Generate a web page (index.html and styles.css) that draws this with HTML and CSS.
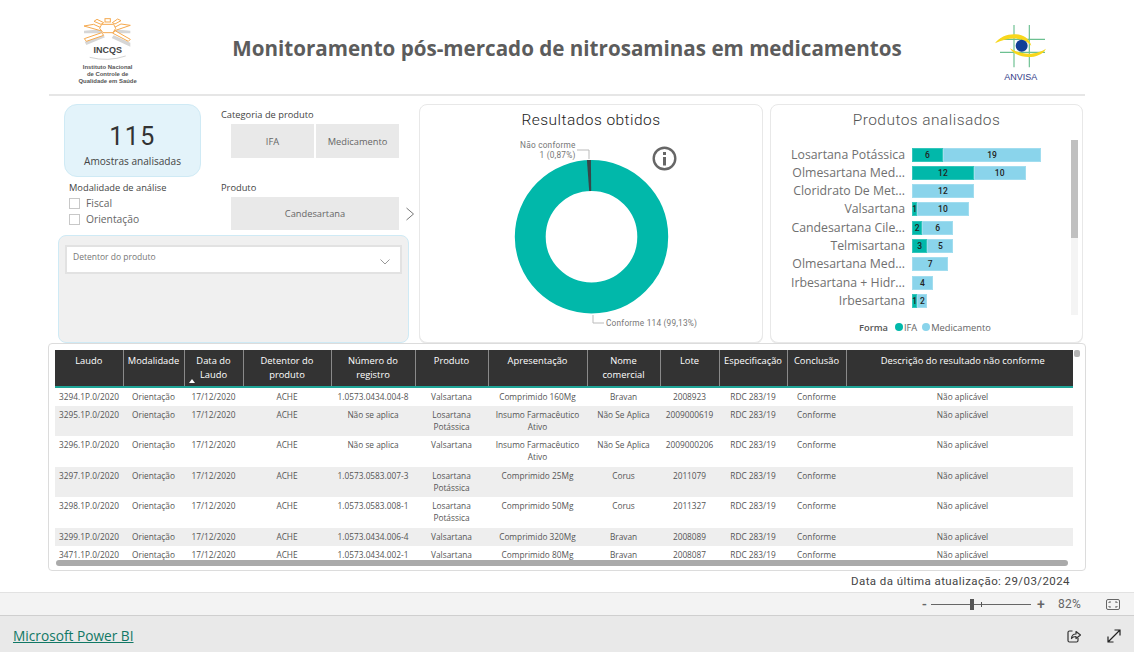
FILE: index.html
```html
<!DOCTYPE html>
<html lang="pt-BR">
<head>
<meta charset="utf-8">
<title>Monitoramento pós-mercado de nitrosaminas em medicamentos</title>
<link rel="stylesheet" href="styles.css">
</head>
<body>
<div class="report">
  <header class="head">
    <svg class="logo-incqs" viewBox="100 45 200 215">
      <g fill="#d6d6d6">
        <polygon points="133,92 185,88 190,100 133,100"/>
        <polygon points="135,125 190,105 196,112 140,135"/>
        <polygon points="272,92 222,88 216,100 272,100"/>
        <polygon points="272,128 222,106 216,114 272,140"/>
      </g>
      <g fill="#fff" stroke="#f5a94e" stroke-width="3">
        <polygon points="133,78 162,73 186,84 186,93"/>
        <polygon points="134,116 186,98 192,106 140,124"/>
        <polygon points="272,76 244,72 221,84 222,93"/>
        <polygon points="272,118 226,92 220,100 266,124"/>
        <polygon points="163,64 172,58 192,68 184,73"/>
        <polygon points="244,62 234,57 218,68 226,72"/>
        <rect x="196" y="56" width="16" height="10"/>
        <polygon points="186,73 222,73 228,85 220,98 190,98 180,85"/>
      </g>
      <text class="incqs-mark" x="204" y="158" text-anchor="middle">INCQS</text>
      <path d="M150 172 Q205 186 258 168" fill="none" stroke="#bbb" stroke-width="2"/>
      <text class="incqs-sub" x="204" y="207" text-anchor="middle">Instituto Nacional</text>
      <text class="incqs-sub" x="204" y="228" text-anchor="middle">de Controle de</text>
      <text class="incqs-sub" x="204" y="248" text-anchor="middle">Qualidade em Saúde</text>
    </svg>
    <h1 class="title">Monitoramento pós-mercado de nitrosaminas em medicamentos</h1>
    <svg class="logo-anvisa" viewBox="90 30 180 190">
      <g stroke="#6cc091" stroke-width="3.5" fill="none">
        <path d="M162 45V172M208 45V172"/>
        <path d="M120 88H255M120 127H255"/>
      </g>
      <path d="M105 100C130 62 205 62 214 108C195 82 150 78 105 100Z" fill="#f8d71c"/>
      <path d="M150 115C170 150 240 150 258 116C235 132 190 140 150 115Z" fill="#f8d71c"/>
      <circle cx="185" cy="107" r="18" fill="#123f97"/>
      <text class="anvisa-mark" x="182" y="211" text-anchor="middle">ANVISA</text>
    </svg>
  </header>
  <div class="rule"></div>

  <section class="top">
    <div class="filters">
      <div class="filters-upper">
        <div class="col-a">
          <div class="kpi">
            <div class="kpi-num">115</div>
            <div class="kpi-label">Amostras analisadas</div>
          </div>
          <div class="mod">
            <div class="slicer-label">Modalidade de análise</div>
            <label class="check"><span class="box"></span>Fiscal</label>
            <label class="check"><span class="box"></span>Orientação</label>
          </div>
        </div>
        <div class="col-b">
          <div class="slicer-label label-cat">Categoria de produto</div>
          <div class="chips">
            <div class="chip">IFA</div>
            <div class="chip">Medicamento</div>
          </div>
          <div class="slicer-label label-prod">Produto</div>
          <div class="prod-row">
            <div class="chip chip-wide">Candesartana</div>
            <svg class="chev" viewBox="0 0 10 14"><path d="M1.5 1L8.5 7L1.5 13" fill="none" stroke="#777" stroke-width="1"/></svg>
          </div>
        </div>
      </div>
      <div class="holder">
        <div class="dropdown">
          <span>Detentor do produto</span>
          <svg class="drop-chev" viewBox="0 0 10 6"><path d="M.5 .5L5 5L9.5 .5" fill="none" stroke="#999" stroke-width="1"/></svg>
        </div>
      </div>
    </div>

    <div class="card card-donut">
      <div class="card-title title-dark">Resultados obtidos</div>
      <svg class="donut" viewBox="0 0 344 212">
        <circle cx="172.5" cy="106.700" r="61.25" fill="none" stroke="#01b8aa" stroke-width="30.9"/>
        <path d="M167.900 30.100L171.900 30L172.200 61L170.200 61Z" fill="#374649"/>
        <path d="M158 20H170V29" fill="none" stroke="#bbb" stroke-width="1"/>
        <path d="M174 185V193H185" fill="none" stroke="#bbb" stroke-width="1"/>
        <text class="donut-label" x="156.500" y="18" text-anchor="end">Não conforme</text>
        <text class="donut-label" x="156.500" y="28" text-anchor="end">1 (0,87%)</text>
        <text class="donut-label" x="187" y="196">Conforme 114 (99,13%)</text>
        <circle cx="245.500" cy="28.500" r="10.800" fill="#fff" stroke="#666" stroke-width="2.400"/>
        <rect x="244" y="27" width="3" height="8.500" fill="#666"/>
        <rect x="244" y="22" width="3" height="3" fill="#666"/>
      </svg>
    </div>

    <div class="card card-bars">
      <div class="card-title">Produtos analisados</div>
      <div class="bars-area">
        <div class="bars">
          <div class="bar-row"><span class="bar-name">Losartana Potássica</span><div class="bar-track"><span class="seg ifa seg-6">6</span><span class="seg med seg-19">19</span></div></div>
          <div class="bar-row"><span class="bar-name">Olmesartana Med...</span><div class="bar-track"><span class="seg ifa seg-12">12</span><span class="seg med seg-10">10</span></div></div>
          <div class="bar-row"><span class="bar-name">Cloridrato De Met...</span><div class="bar-track"><span class="seg med seg-12">12</span></div></div>
          <div class="bar-row"><span class="bar-name">Valsartana</span><div class="bar-track"><span class="seg ifa seg-1">1</span><span class="seg med seg-10">10</span></div></div>
          <div class="bar-row"><span class="bar-name">Candesartana Cile...</span><div class="bar-track"><span class="seg ifa seg-2">2</span><span class="seg med seg-6">6</span></div></div>
          <div class="bar-row"><span class="bar-name">Telmisartana</span><div class="bar-track"><span class="seg ifa seg-3">3</span><span class="seg med seg-5">5</span></div></div>
          <div class="bar-row"><span class="bar-name">Olmesartana Med...</span><div class="bar-track"><span class="seg med seg-7">7</span></div></div>
          <div class="bar-row"><span class="bar-name">Irbesartana + Hidr...</span><div class="bar-track"><span class="seg med seg-4">4</span></div></div>
          <div class="bar-row"><span class="bar-name">Irbesartana</span><div class="bar-track"><span class="seg ifa seg-1">1</span><span class="seg med seg-2">2</span></div></div>
        </div>
        <div class="vscroll"><div class="vthumb"></div></div>
      </div>
      <div class="legend">
        <b>Forma</b>
        <span class="dot dot-ifa"></span><span>IFA</span>
        <span class="dot dot-med"></span><span>Medicamento</span>
      </div>
    </div>
  </section>

  <section class="table-card">
    <div class="table-view">
      <table class="grid">
        <colgroup>
          <col class="c1"><col class="c2"><col class="c3"><col class="c4"><col class="c5"><col class="c6"><col class="c7"><col class="c8"><col class="c9"><col class="c10"><col class="c11"><col class="c12">
        </colgroup>
        <thead>
          <tr>
            <th>Laudo</th><th>Modalidade</th><th class="sorted">Data do<br>Laudo<span class="sort-arrow"></span></th><th>Detentor do<br>produto</th><th>Número do<br>registro</th><th>Produto</th><th>Apresentação</th><th>Nome<br>comercial</th><th>Lote</th><th>Especificação</th><th>Conclusão</th><th>Descrição do resultado não conforme</th>
          </tr>
        </thead>
        <tbody>
          <tr><td>3294.1P.0/2020</td><td>Orientação</td><td>17/12/2020</td><td>ACHE</td><td>1.0573.0434.004-8</td><td>Valsartana</td><td>Comprimido 160Mg</td><td>Bravan</td><td>2008923</td><td>RDC 283/19</td><td>Conforme</td><td>Não aplicável</td></tr>
          <tr><td>3295.1P.0/2020</td><td>Orientação</td><td>17/12/2020</td><td>ACHE</td><td>Não se aplica</td><td>Losartana Potássica</td><td>Insumo Farmacêutico Ativo</td><td>Não Se Aplica</td><td>2009000619</td><td>RDC 283/19</td><td>Conforme</td><td>Não aplicável</td></tr>
          <tr><td>3296.1P.0/2020</td><td>Orientação</td><td>17/12/2020</td><td>ACHE</td><td>Não se aplica</td><td>Valsartana</td><td>Insumo Farmacêutico Ativo</td><td>Não Se Aplica</td><td>2009000206</td><td>RDC 283/19</td><td>Conforme</td><td>Não aplicável</td></tr>
          <tr><td>3297.1P.0/2020</td><td>Orientação</td><td>17/12/2020</td><td>ACHE</td><td>1.0573.0583.007-3</td><td>Losartana Potássica</td><td>Comprimido 25Mg</td><td>Corus</td><td>2011079</td><td>RDC 283/19</td><td>Conforme</td><td>Não aplicável</td></tr>
          <tr><td>3298.1P.0/2020</td><td>Orientação</td><td>17/12/2020</td><td>ACHE</td><td>1.0573.0583.008-1</td><td>Losartana Potássica</td><td>Comprimido 50Mg</td><td>Corus</td><td>2011327</td><td>RDC 283/19</td><td>Conforme</td><td>Não aplicável</td></tr>
          <tr><td>3299.1P.0/2020</td><td>Orientação</td><td>17/12/2020</td><td>ACHE</td><td>1.0573.0434.006-4</td><td>Valsartana</td><td>Comprimido 320Mg</td><td>Bravan</td><td>2008089</td><td>RDC 283/19</td><td>Conforme</td><td>Não aplicável</td></tr>
          <tr><td>3471.1P.0/2020</td><td>Orientação</td><td>17/12/2020</td><td>ACHE</td><td>1.0573.0434.002-1</td><td>Valsartana</td><td>Comprimido 80Mg</td><td>Bravan</td><td>2008087</td><td>RDC 283/19</td><td>Conforme</td><td>Não aplicável</td></tr>
        </tbody>
      </table>
    </div>
    <div class="hscroll"></div>
    <div class="vnub"></div>
  </section>

  <div class="updated">Data da última atualização: 29/03/2024</div>
</div>

<div class="zoombar">
  <span class="zoom-sign">-</span>
  <div class="slider"><span class="slider-thumb"></span><span class="slider-tick"></span></div>
  <span class="zoom-sign zoom-plus">+</span>
  <span class="zoom-val">82%</span>
  <svg class="fit" viewBox="0 0 14 11"><rect x=".5" y=".5" width="13" height="10" rx="1.500" fill="none" stroke="#666"/><path d="M3 4V3H5M9 3H11V4M11 7V8H9M5 8H3V7" fill="none" stroke="#666"/></svg>
</div>

<footer class="foot">
  <a class="pbi" href="#">Microsoft Power BI</a>
  <div class="foot-icons">
    <svg class="foot-ico" viewBox="0 0 14 14"><path d="M5.500 2H2.500Q1 2 1 3.500V11.500Q1 13 2.500 13H9.500Q11 13 11 11.500V9" fill="none" stroke="#333" stroke-width="1.200"/><path d="M4.500 9.500C4.500 6.500 6.500 5 9 5V2.500L13.500 6L9 9.500V7.500C7 7.500 5.500 8 4.500 9.500Z" fill="none" stroke="#333" stroke-width="1.200" stroke-linejoin="round"/></svg>
    <svg class="foot-ico" viewBox="0 0 14 14"><path d="M1 13L13 1M7.500 1H13V6.500M1 7.500V13H6.500" fill="none" stroke="#222" stroke-width="1.200"/></svg>
  </div>
</footer>
</body>
</html>
```

FILE: styles.css
```css
* { box-sizing: border-box; }
html, body { margin: 0; padding: 0; }
body {
  width: 1134px;
  height: 652px;
  overflow: hidden;
  background: #fff;
  font-family: "Open Sans", "Noto Sans", sans-serif;
  color: #666;
}
.report { height: 592px; background: #fff; }

/* header */
.head {
  height: 94px;
  display: grid;
  grid-template-columns: 1fr auto 1fr;
  align-items: start;
}
.logo-incqs { width: 66.67px; height: 71.67px; margin: 15px 0 0 73px; }
.logo-anvisa { width: 60px; height: 63.33px; margin: 20px 84px 0 0; justify-self: end; }
.incqs-mark { font: 700 27px "Liberation Sans", sans-serif; fill: #444; }
.incqs-sub { font: 700 17.800px "Liberation Sans", sans-serif; fill: #555; }
.anvisa-mark { font: 400 27px "Liberation Sans", sans-serif; fill: #2f3a86; }
.title {
  margin: 33px 0 0;
  font-size: 20.600px;
  line-height: 30px;
  font-weight: 700;
  color: #5c5c5c;
  white-space: nowrap;
}
.rule { height: 2px; width: 1036px; margin-left: 49px; background: #e6e6e6; }

/* top row */
.top {
  display: flex;
  height: 239px;
  margin-top: 8px;
  padding-left: 50px;
}
.filters { width: 360px; flex: none; display: flex; flex-direction: column; }
.filters-upper { display: flex; height: 131px; }
.col-a { width: 171px; flex: none; }
.col-b { width: 195px; flex: none; font-size: 9.300px; }
.kpi {
  width: 137px;
  height: 73px;
  margin-left: 14px;
  background: #e3f3fa;
  border: 1px solid #cfeaf5;
  border-radius: 13px;
  text-align: center;
  padding-top: 18px;
}
.kpi-num {
  font: 400 25px/28px Roboto, sans-serif;
  letter-spacing: 1.500px;
  color: #333;
}
.kpi-label { font-size: 10.100px; line-height: 14px; margin-top: 3px; color: #444; }
.slicer-label { font-size: 9.300px; line-height: 12px; color: #444; white-space: nowrap; }
.mod { margin: 5px 0 0 19px; }
.mod .slicer-label { line-height: 12px; margin-bottom: 1px; }
.check {
  display: flex;
  align-items: center;
  gap: 6px;
  height: 16px;
  font-size: 10.300px;
  color: #666;
}
.box { width: 11px; height: 11px; border: 1px solid #c8c8c8; background: #fff; }
.label-cat { margin-top: 5px; }
.label-prod { margin-top: 24px; }
.chips { display: flex; gap: 2px; margin: 3px 0 0 10px; width: 168px; }
.chip {
  flex: 1;
  height: 34px;
  background: #e9e9e9;
  color: #666;
  font-size: 9.300px;
  display: flex;
  align-items: center;
  justify-content: center;
}
.prod-row { display: flex; align-items: center; margin: 3px 0 0 10px; }
.chip-wide { flex: none; width: 168px; height: 33px; }
.chev { width: 10px; height: 14px; margin-left: 6px; flex: none; }
.holder {
  width: 351px;
  height: 108px;
  margin-left: 8px;
  background: #f0f0f0;
  border: 1px solid #cfeaf5;
  border-radius: 8px;
  padding: 9px 6px;
}
.dropdown {
  height: 29px;
  background: #fff;
  border: 2px solid #e2e2e2;
  display: flex;
  justify-content: space-between;
  padding: 3px 10px 0 6px;
  font-size: 8.500px;
  line-height: 14px;
  color: #777;
}
.drop-chev { width: 10px; height: 6px; margin-top: 9px; }

/* cards */
.card {
  background: #fff;
  border: 1px solid #e8e8e8;
  border-radius: 8px;
  box-shadow: 0 1px 0 #ececec;
}
.card-donut { width: 344px; margin-left: 9px; display: flex; flex-direction: column; }
.card-bars { width: 313px; margin-left: 7px; display: flex; flex-direction: column; }
.card-title {
  font: 300 15.500px/20px Roboto, sans-serif;
  letter-spacing: .45px;
  text-align: center;
  margin-top: 5px;
  color: #555;
}
.title-dark { color: #222; }
.donut { width: 344px; height: 212px; display: block; margin-left: -1px; }
.donut-label { font: 400 8.300px Roboto, sans-serif; fill: #777; letter-spacing: .2px; }

.bars-area { display: flex; height: 175px; margin-top: 10px; }
.bars { width: 300px; flex: none; padding-top: 7.500px; display: flex; flex-direction: column; gap: 4.300px; }
.bar-row { display: flex; height: 14px; align-items: center; }
.bar-name {
  width: 134px;
  text-align: right;
  font: 400 12.300px/14px "Open Sans", sans-serif;
  color: #707070;
  white-space: nowrap;
}
.bar-track { display: flex; margin-left: 7px; height: 14px; }
.seg {
  display: flex;
  align-items: center;
  justify-content: center;
  font: 500 8.500px Roboto, sans-serif;
  color: #222;
  border: 1px solid transparent;
}
.ifa { background: #01b8aa; border-color: #33c6bb; }
.med { background: #8ad4eb; border-color: #a1ddef; }
.seg-1 { width: 5.160px; }
.seg-2 { width: 10.320px; }
.seg-3 { width: 15.480px; }
.seg-4 { width: 20.640px; }
.seg-5 { width: 25.800px; }
.seg-6 { width: 30.960px; }
.seg-7 { width: 36.120px; }
.seg-10 { width: 51.600px; }
.seg-12 { width: 61.920px; }
.seg-19 { width: 98.040px; }
.vscroll { width: 7px; height: 175px; background: #f4f4f4; }
.vthumb { height: 98px; background: #c0c0c0; }
.legend {
  display: flex;
  align-items: center;
  justify-content: flex-start;
  padding-left: 88px;
  margin-top: 5px;
  height: 14px;
  font-size: 9.300px;
  color: #666;
}
.legend b { font-weight: 600; color: #555; margin-right: 7px; }
.dot { width: 8px; height: 8px; border-radius: 50%; margin-right: 1px; }
.dot-ifa { background: #01b8aa; }
.dot-med { background: #8ad4eb; margin-left: 5px; }

/* table */
.table-card {
  position: relative;
  width: 1038px;
  height: 228px;
  margin: 0 0 0 48px;
  border: 1px solid #dcdcdc;
  border-radius: 4px;
  padding: 6px 0 0 6px;
}
.table-view { width: 1018px; height: 210px; overflow: hidden; }
.grid { width: 1018px; border-collapse: collapse; table-layout: fixed; font-size: 8.300px; }
.c1 { width: 68px; } .c2 { width: 61px; } .c3 { width: 59px; } .c4 { width: 88px; }
.c5 { width: 84px; } .c6 { width: 73px; } .c7 { width: 99px; } .c8 { width: 73px; }
.c9 { width: 59px; } .c10 { width: 68px; } .c11 { width: 59px; } .c12 { width: 227px; }
.grid th {
  height: 37px;
  background: #333;
  color: #fff;
  font-size: 9.350px;
  line-height: 13.500px;
  font-weight: 400;
  vertical-align: top;
  padding: 4px 0 0;
  border-right: 1px solid #8a8a8a;
  border-bottom: 2px solid #1fa598;
  position: relative;
  white-space: nowrap;
}
.grid th:last-child { border-right: 0; padding-left: 6px; }
.sort-arrow {
  position: absolute;
  left: 4px;
  bottom: 3px;
  border-left: 3.500px solid transparent;
  border-right: 3.500px solid transparent;
  border-bottom: 4px solid #fff;
}
.grid td {
  padding: 3px 2px;
  line-height: 12px;
  text-align: center;
  vertical-align: top;
  color: #555;
}
.grid tbody tr:nth-child(3) td,
.grid tbody tr:nth-child(5) td { height: 31px; }
.grid td:last-child { padding-left: 8px; }
.grid tbody tr:nth-child(even) td { background: #eeeeee; }
.hscroll {
  position: absolute;
  left: 7px;
  top: 216px;
  width: 1012px;
  height: 6px;
  background: #aaa;
  border-radius: 3px;
}
.vnub {
  position: absolute;
  left: 1025px;
  top: 6px;
  width: 6px;
  height: 7px;
  background: #b5b5b5;
  border-radius: 2px;
}
.updated {
  text-align: right;
  padding-right: 64px;
  margin-top: 3px;
  font: 400 11.500px/15px Roboto, sans-serif;
  letter-spacing: .42px;
  color: #444;
}

/* bottom bars */
.zoombar {
  height: 23px;
  background: #f3f3f3;
  border-top: 1px solid #e2e2e2;
  display: flex;
  align-items: center;
  font-family: Roboto, sans-serif;
  color: #666;
}
.zoom-sign { font-size: 14px; font-weight: 500; margin-left: 922px; width: 9px; }
.slider { position: relative; width: 100px; height: 1px; background: #666; }
.slider-thumb { position: absolute; left: 39px; top: -5px; width: 4px; height: 11px; background: #555; }
.slider-tick { position: absolute; left: 50px; top: -2px; width: 1px; height: 5px; background: #555; }
.zoom-plus { margin-left: 6px; }
.zoom-val { font-size: 12px; margin-left: 12px; letter-spacing: .2px; }
.fit { width: 14px; height: 11px; margin-left: 25px; }
.foot {
  height: 37px;
  background: #e9e9e9;
  border-top: 1px solid #cfcfcf;
  display: flex;
  align-items: center;
  justify-content: space-between;
  padding: 3px 13px 0;
}
.pbi { font-size: 13.700px; color: #117865; text-decoration: underline; }
.foot-icons { display: flex; gap: 26px; }
.foot-ico { width: 14px; height: 14px; display: block; }
```
